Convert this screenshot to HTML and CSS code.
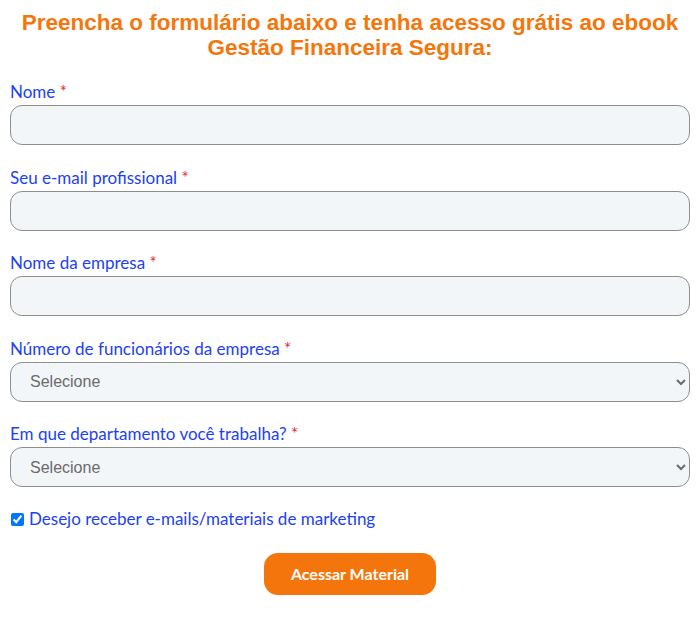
FILE: index.html
```html
<!DOCTYPE html>
<html>

<head>
    <meta charset="utf-8">
    <title>Ebook Gestão Financeira Segura</title>
    <link rel="stylesheet" href="styles.css">
</head>

<body>
  <h3 class="titulo">Preencha o formulário abaixo e tenha acesso grátis ao ebook Gestão Financeira Segura:</h3>

  <form name="ebook" class="form">
    <div class="campo">
      <label for="nome">Nome <span class="req">*</span></label>
      <input type="text" id="nome">
    </div>
    <div class="campo">
      <label for="email">Seu e-mail profissional <span class="req">*</span></label>
      <input type="email" id="email">
    </div>
    <div class="campo">
      <label for="empresa">Nome da empresa <span class="req">*</span></label>
      <input type="text" id="empresa">
    </div>
    <div class="campo">
      <label for="func">Número de funcionários da empresa <span class="req">*</span></label>
      <select id="func">
        <option>Selecione</option>
        <option>1 a 10</option>
        <option>11 a 50</option>
        <option>51 a 200</option>
        <option>Mais de 200</option>
      </select>
    </div>
    <div class="campo">
      <label for="depto">Em que departamento você trabalha? <span class="req">*</span></label>
      <select id="depto">
        <option>Selecione</option>
        <option>Financeiro</option>
        <option>Diretoria</option>
        <option>Outro</option>
      </select>
    </div>

    <div class="check">
      <input type="checkbox" id="mkt" checked>
      <label for="mkt">Desejo receber e-mails/materiais de marketing</label>
    </div>

    <div class="acoes">
      <input type="button" class="botao" value="Acessar Material">
    </div>
  </form>
</body>
</html>
```

FILE: styles.css
```css
body {
  margin: 0;
  padding: 10px 10px 0;
  font-family: Lato, "Liberation Sans", sans-serif;
  background: #fff;
}

.titulo {
  margin: 0 0 20px;
  font-family: "Liberation Sans", Arial, sans-serif;
  font-size: 22.5px;
  line-height: 25px;
  font-weight: bold;
  color: #f5760b;
  text-align: center;
}

.campo {
  display: flex;
  flex-direction: column;
  margin-bottom: 20.5px;
}

.campo label {
  font-size: 17px;
  line-height: 24px;
  color: #1c41f5;
  margin-bottom: 1px;
}

.req {
  color: #ec2a33;
}

.campo input, .campo select {
  height: 40px;
  width: 100%;
  padding: 0 15px;
  border: 1px solid #8e8e8e;
  border-radius: 12px;
  background-color: #f3f6f9;
  box-sizing: border-box;
  font-family: "Liberation Sans", Arial, sans-serif;
  font-size: 16px;
  color: #6b6b6b;
}

.check {
  display: flex;
  align-items: center;
  margin-top: -1px;
}

.check input {
  margin: 2px 5px 0 1px;
  width: 13px;
  height: 13px;
}

.check label {
  font-size: 17px;
  line-height: 24px;
  color: #1c41f5;
}

.acoes {
  display: flex;
  justify-content: center;
  margin-top: 22px;
}

.botao {
  width: 172px;
  height: 42px;
  border: none;
  border-radius: 14px;
  background-color: #f4750b;
  color: #fff;
  font-family: Lato, sans-serif;
  font-weight: bold;
  font-size: 16px;
  cursor: pointer;
}
```
